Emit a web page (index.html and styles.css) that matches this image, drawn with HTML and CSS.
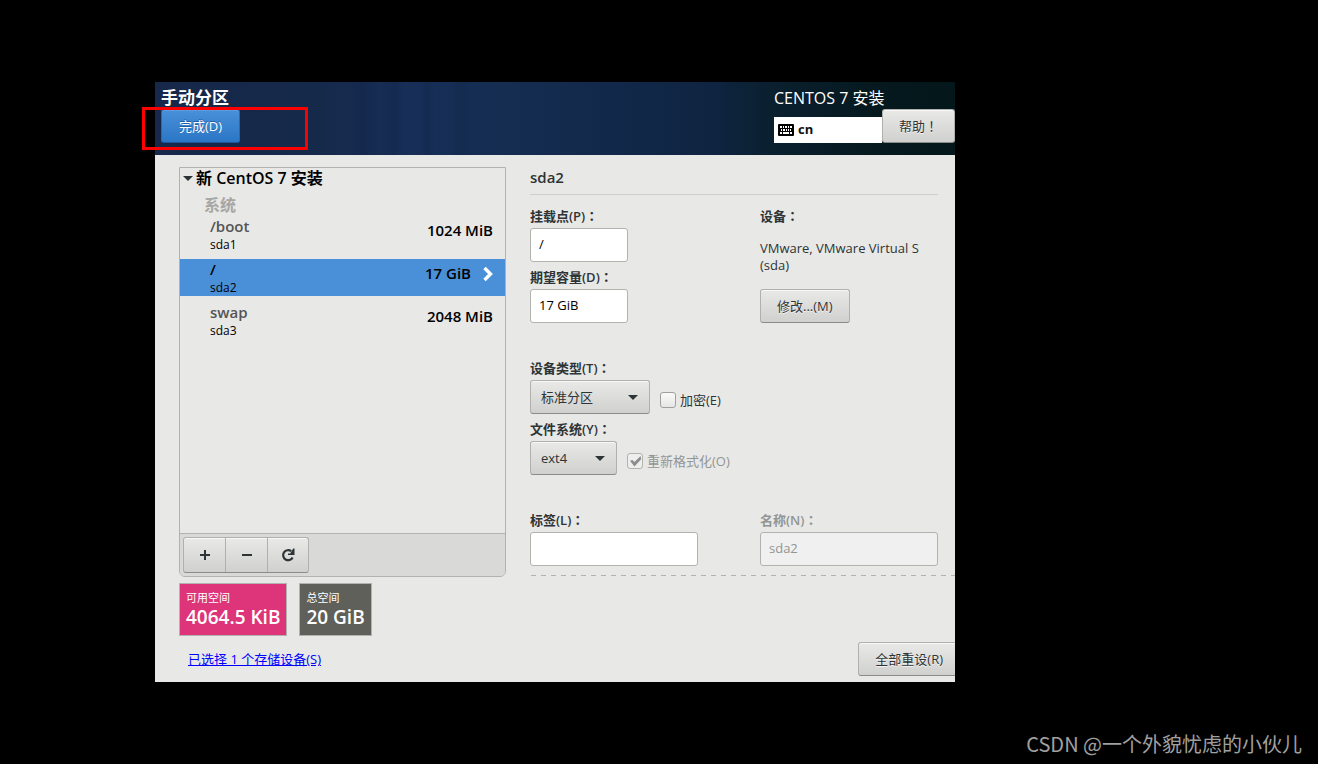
FILE: index.html
```html
<!DOCTYPE html>
<html lang="zh-CN">
<head>
<meta charset="utf-8">
<title>手动分区</title>
<meta name="viewport" content="width=device-width, initial-scale=1">
<link rel="stylesheet" href="styles.css">
</head>
<body>
<div class="stage">
  <div class="window">
    <header class="banner">
      <div class="banner-main">
        <h1 class="banner-title">手动分区</h1>
        <button class="btn btn-primary" type="button">完成(D)</button>
      </div>
      <div class="banner-side">
        <div class="product">CENTOS 7 安装</div>
        <div class="banner-tools">
          <div class="layout">
            <svg class="keyboard" viewBox="0 0 16 12" aria-hidden="true">
              <rect width="16" height="12" rx="1" fill="#000"/>
              <path d="M2 3h2M5 3h1M7 3h2M10 3h1M12 3h2M3 6h1M5 6h2M8 6h1M10 6h1M12 6h1M2 9h2M5 9h6M12 9h2" stroke="#fff" stroke-width="2"/>
            </svg>
            <span class="layout-name">cn</span>
          </div>
          <button class="btn btn-help" type="button">帮助<span class="mark" lang="zh-Hant">！</span></button>
        </div>
      </div>
    </header>

    <main class="content">
      <div class="columns">
        <section class="sidebar">
          <div class="panel">
            <div class="list">
              <button class="group" type="button">
                <svg class="caret" viewBox="0 0 10 5" aria-hidden="true"><path d="M0 0h10L5 5z" fill="#2e3436"/></svg>
                新 CentOS 7 安装
              </button>
              <h2 class="section">系统</h2>
              <ul class="mounts">
                <li><button class="mount" type="button"><span class="names"><span class="path">/boot</span><span class="dev">sda1</span></span><span class="size">1024 MiB</span></button></li>
                <li><button class="mount selected" type="button"><span class="names"><span class="path">/</span><span class="dev">sda2</span></span><span class="size">17 GiB</span><svg class="chevron" viewBox="0 0 10 16" aria-hidden="true"><path d="M1.5 2l6 6-6 6" fill="none" stroke="#fff" stroke-width="3.4"/></svg></button></li>
                <li><button class="mount" type="button"><span class="names"><span class="path">swap</span><span class="dev">sda3</span></span><span class="size">2048 MiB</span></button></li>
              </ul>
            </div>
            <div class="toolbar">
              <div class="tools">
                <button class="tool" type="button" aria-label="添加"><svg viewBox="0 0 16 16"><path d="M3 8h10M8 3v10" stroke="#2e3436" stroke-width="2"/></svg></button>
                <button class="tool" type="button" aria-label="删除"><svg viewBox="0 0 16 16"><path d="M3 8h10" stroke="#2e3436" stroke-width="2"/></svg></button>
                <button class="tool" type="button" aria-label="刷新"><svg viewBox="0 0 16 16"><path d="M11.2 4.2A5 5 0 1 0 12.6 10.4" fill="none" stroke="#2e3436" stroke-width="2.2"/><path d="M14.5 1.5v6.5H8V6.5h2.2l3-5z" fill="#2e3436"/></svg></button>
              </div>
            </div>
          </div>
          <div class="spaces">
            <div class="space free"><span class="space-label">可用空间</span><span class="space-value">4064.5 KiB</span></div>
            <div class="space total"><span class="space-label">总空间</span><span class="space-value">20 GiB</span></div>
          </div>
        </section>

        <form class="details">
          <h2 class="details-title">sda2</h2>
          <div class="fields">
            <div>
              <label class="label" for="mount">挂载点(P)<span class="mark" lang="zh-Hant">：</span></label>
              <input class="entry short" id="mount" type="text" value="/">
              <label class="label" for="capacity">期望容量(D)<span class="mark" lang="zh-Hant">：</span></label>
              <input class="entry short" id="capacity" type="text" value="17 GiB">
            </div>
            <div>
              <div class="label">设备<span class="mark" lang="zh-Hant">：</span></div>
              <p class="device">VMware, VMware Virtual S (sda)</p>
              <button class="btn" type="button">修改...(M)</button>
            </div>
          </div>
          <div class="group-fields">
            <label class="label" for="type">设备类型(T)<span class="mark" lang="zh-Hant">：</span></label>
            <div class="choice">
              <span class="combo"><select class="select select-type" id="type"><option>标准分区</option></select><svg class="arrow" viewBox="0 0 10 5" aria-hidden="true"><path d="M0 0h10L5 5z" fill="#2e3436"/></svg></span>
              <label class="check"><input type="checkbox">加密(E)</label>
            </div>
            <label class="label" for="fs">文件系统(Y)<span class="mark" lang="zh-Hant">：</span></label>
            <div class="choice">
              <span class="combo"><select class="select select-fs" id="fs"><option>ext4</option></select><svg class="arrow" viewBox="0 0 10 5" aria-hidden="true"><path d="M0 0h10L5 5z" fill="#2e3436"/></svg></span>
              <label class="check muted"><input type="checkbox" checked disabled>重新格式化(O)</label>
            </div>
          </div>
          <div class="fields">
            <div>
              <label class="label" for="tag">标签(L)<span class="mark" lang="zh-Hant">：</span></label>
              <input class="entry medium" id="tag" type="text">
            </div>
            <div>
              <label class="label muted" for="name">名称(N)<span class="mark" lang="zh-Hant">：</span></label>
              <input class="entry" id="name" type="text" value="sda2" disabled>
            </div>
          </div>
          <svg class="dashes" aria-hidden="true"><path d="M1 .5H2000" stroke="#b2b2ae" stroke-dasharray="5 5"/></svg>
        </form>
      </div>
      <footer class="actions">
        <a class="storage" href="#">已选择 1 个存储设备(S)</a>
        <button class="btn btn-reset" type="button">全部重设(R)</button>
      </footer>
    </main>
  </div>
  <div class="highlight"></div>
</div>
<div class="watermark">CSDN @一个外貌忧虑的小伙儿</div>
</body>
</html>
```
FILE: styles.css
```css
* { box-sizing: border-box; }

body {
  margin: 0;
  min-height: 100vh;
  display: flex;
  flex-direction: column;
  background: #000;
  color: #2e3436;
  font: 13px/18px "Open Sans", "Noto Sans CJK SC", sans-serif;
}
h1, h2, p, ul { margin: 0; padding: 0; }
ul { list-style: none; }
button, input, select { font: inherit; color: inherit; margin: 0; }
svg { display: block; }

.stage {
  position: relative;
  flex: 1;
  display: flex;
  padding: 82px 363px 0 155px;
}
.window {
  flex: 1;
  min-width: 0;
  display: flex;
  flex-direction: column;
  overflow: hidden;
  background: #e8e8e6;
}
.highlight {
  position: absolute;
  left: 142px;
  top: 107px;
  width: 166px;
  height: 43px;
  border: 3px solid #f00;
  pointer-events: none;
}

/* Full-width punctuation centred in its cell */
.mark { font-family: "Noto Sans CJK TC", sans-serif; line-height: 1; }

/* Banner */
.banner {
  display: flex;
  justify-content: space-between;
  padding: 5px 0 12px 6px;
  color: #fff;
  background:
    linear-gradient(90deg, transparent 24%, rgba(8, 20, 50, .16) 26%, transparent 28%, rgba(8, 20, 50, .16) 30%, transparent 31% 33%, rgba(8, 20, 50, .16) 34%, transparent 35% 37%, rgba(8, 20, 50, .12) 38%, transparent 40%),
    linear-gradient(90deg, #17284a 0%, #15294a 20%, #172f58 32%, #142d50 44%, #12284a 58%, #0e2440 70%, #0a202f 77%, #05191e 90%, #04171b 100%);
}
.banner-title, .product { line-height: 22px; }
.banner-title { font-size: 17px; font-weight: 600; }
.product { font-size: 16px; }
.banner-tools { display: flex; align-items: flex-end; }
.layout {
  display: flex;
  align-items: center;
  gap: 4px;
  width: 108px;
  height: 26px;
  padding-left: 4px;
  background: #fff;
  color: #111;
  font-weight: 700;
}
.layout-name { padding-bottom: 2px; }
.keyboard { width: 16px; height: 12px; }

.btn {
  height: 34px;
  padding: 0 16px;
  border: 1px solid #b0b0ac;
  border-bottom-color: #8b8b88;
  border-radius: 3px;
  background: linear-gradient(#e9e9e7, #d0d0ce);
  box-shadow: inset 0 1px #f8f8f8;
  color: #2e3436;
  text-shadow: 0 1px #f4f4f4;
  white-space: nowrap;
}
.btn-primary {
  width: 79px;
  border-color: #2a68b0 #2768b4 #1c5598;
  background: linear-gradient(#4a90d9, #2a76c6);
  box-shadow: inset 0 1px #5b9ce0;
  color: #fff;
  text-shadow: 0 -1px #1f5fa6;
}
.btn-help { width: 73px; }

/* Body */
.content {
  flex: 1;
  display: flex;
  flex-direction: column;
  gap: 6px;
  padding: 12px 0 6px 24px;
}
.columns { flex: 1; display: flex; gap: 24px; }
.sidebar {
  flex: 0 0 327px;
  display: flex;
  flex-direction: column;
  gap: 6px;
}
.panel {
  flex: 1;
  display: flex;
  flex-direction: column;
  border: 1px solid #b2b2ae;
  border-radius: 0 0 6px 6px;
  overflow: hidden;
}
.list { flex: 1; color: #000; font-size: 15px; }
.group {
  display: flex;
  align-items: center;
  gap: 3px;
  padding: 0 0 0 3px;
  border: 0;
  background: none;
  font-size: 16px;
  font-weight: 600;
  line-height: 20px;
}
.caret, .arrow { width: 10px; height: 5px; }
.section {
  padding: 6px 0 0 24px;
  color: #a6a6a4;
  font-size: 16px;
  font-weight: 600;
  line-height: 22px;
}
.mounts { display: flex; flex-direction: column; gap: 6px; }
.mount {
  display: flex;
  align-items: center;
  width: 100%;
  height: 37px;
  padding: 0 12px 0 30px;
  border: 0;
  background: none;
  font-weight: 600;
  text-align: left;
}
.mount.selected { background: #4a90d9; }
.names { flex: 1; }
.path, .dev { display: block; }
.path { color: #555; line-height: 21px; }
.selected .path { color: #000; }
.dev { font-size: 12px; font-weight: 400; line-height: 16px; }
.size { padding-bottom: 10px; }
.chevron { width: 10px; height: 16px; margin: 0 0 8px 12px; }

.toolbar { padding: 3px; border-top: 1px solid #b2b2ae; background: #d9d9d7; }
.tools {
  display: inline-flex;
  vertical-align: top;
  border: 1px solid #b0b0ac;
  border-bottom-color: #8b8b88;
  border-radius: 3px;
  background: linear-gradient(#e9e9e7, #d0d0ce);
  box-shadow: inset 0 1px #f8f8f8;
}
.tool {
  display: grid;
  place-items: center;
  width: 42px;
  height: 34px;
  padding: 0;
  border: 0;
  border-right: 1px solid #b0b0ac;
  background: none;
}
.tool:last-child { width: 40px; border-right: 0; }
.tool svg { width: 16px; height: 16px; }

.spaces { display: flex; gap: 12px; }
.space {
  padding: 5px 6px 8px;
  border: 1px solid #b2b2ae;
  color: #fff;
}
.free { background: #de347a; }
.total { background: #60605a; }
.space-label, .space-value { display: block; }
.space-label { font-size: 11px; line-height: 18px; }
.space-value { font-size: 19px; font-weight: 600; line-height: 20px; }

/* Details */
.details { flex: 1; min-width: 0; }
.details-title {
  margin: 0 17px 6px 0;
  padding-bottom: 7px;
  border-bottom: 1px solid #cececb;
  font-size: 15px;
  font-weight: 600;
  line-height: 20px;
}
.fields {
  display: grid;
  grid-template-columns: 230px 1fr;
  margin-right: 17px;
}
.group-fields { margin: 30px 0; }
.label {
  display: block;
  padding-top: 3px;
  font-weight: 600;
  line-height: 24px;
}
.muted { color: #929593; }
.entry {
  display: block;
  width: 100%;
  height: 34px;
  padding: 0 8px 2px;
  border: 1px solid #b2b2ae;
  border-radius: 3px;
  background: #fff;
  color: #000;
}
.entry:disabled { background: #f0f0f0; color: #929593; }
.short { width: 98px; }
.medium { width: 168px; }
.device { margin: 12px 0 15px; line-height: 17px; }
.choice { display: flex; gap: 10px; }
.combo { display: grid; align-items: center; justify-items: end; }
.combo > * { grid-area: 1 / 1; }
.arrow { margin-right: 12px; pointer-events: none; }
.select {
  appearance: none;
  height: 34px;
  padding: 0 10px;
  border: 1px solid #b0b0ac;
  border-bottom-color: #8b8b88;
  border-radius: 3px;
  background: linear-gradient(#e9e9e7, #d0d0ce);
  box-shadow: inset 0 1px #f8f8f8;
}
.select-type { width: 120px; }
.select-fs { width: 87px; }
.check { display: flex; align-items: center; gap: 4px; padding-top: 6px; }
.check input {
  appearance: none;
  width: 16px;
  height: 16px;
  border: 1px solid #a0a09d;
  border-radius: 3px;
  background: linear-gradient(#fafafa, #e6e6e4);
}
.check input:disabled { border-color: #b2b2ae; background: #eee; }
.check input:checked::before {
  content: "";
  display: block;
  width: 14px;
  height: 14px;
  background: #8a8d8b;
  clip-path: polygon(14% 48%, 32% 42%, 46% 58%, 90% 14%, 94% 38%, 46% 90%);
}
.dashes { width: 100%; height: 1px; margin-top: 9px; }

.actions { display: flex; align-items: center; justify-content: space-between; padding-left: 9px; }
.storage { color: #00f; }
.btn-reset { margin-right: -5px; }

.watermark {
  height: 82px;
  padding: 48px 16px 0 0;
  color: #a0a0a0;
  font: 20px/28px "Noto Sans CJK SC", sans-serif;
  text-align: right;
}
```
